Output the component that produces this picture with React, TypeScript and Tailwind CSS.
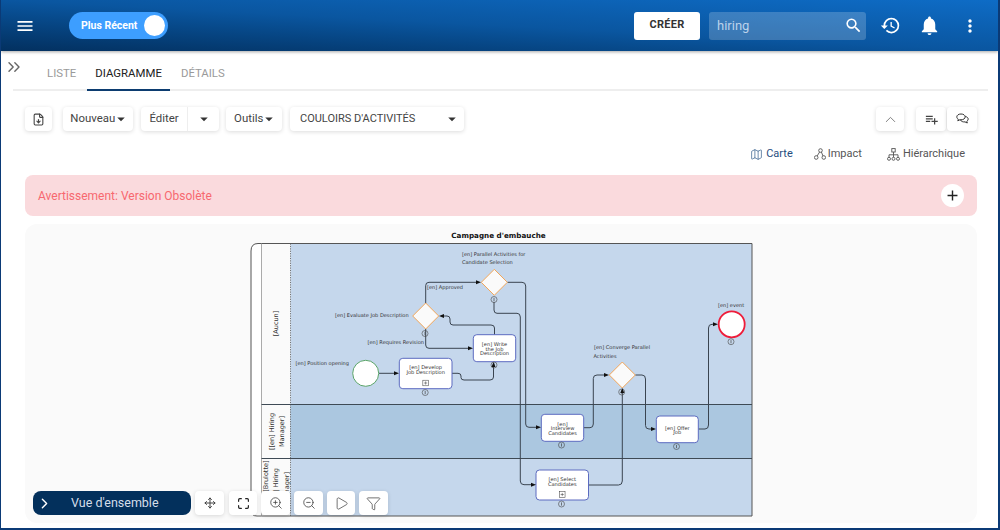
import { ChevronRight, ChevronUp, ChevronsRight, FileDown, Filter, Map, Maximize, Move, Play, ZoomIn, ZoomOut } from "lucide-react";
import { MdAdd, MdArrowDropDown, MdHistory, MdMenu, MdMoreVert, MdNotifications, MdPlaylistAdd, MdSearch } from "react-icons/md";

const font = "font-['Roboto',sans-serif]";
const btn = "flex h-6 items-center justify-center rounded-[4px] bg-white text-[#444] shadow-[0_1px_4px_rgba(0,0,0,0.14)]";

function Caret() {
  return <MdArrowDropDown size={18} className="-ml-[3px] -mr-[4.5px] text-[#333]" />;
}

function ImpactIcon() {
  return (
    <svg width="12" height="12" viewBox="0 0 12 12" fill="none" stroke="#555" strokeWidth="0.9">
      <circle cx="6.5" cy="2.5" r="1.8" />
      <circle cx="2.2" cy="9.5" r="1.8" />
      <circle cx="9.8" cy="9.5" r="1.8" />
      <path d="M5.6 4 3.1 8M7.4 4l1.6 4" />
    </svg>
  );
}

function HierarchyIcon() {
  return (
    <svg width="13" height="13" viewBox="0 0 13 13" fill="none" stroke="#555" strokeWidth="0.9">
      <rect x="4.8" y="0.6" width="3.4" height="3.4" />
      <circle cx="2" cy="10.8" r="1.5" />
      <circle cx="6.5" cy="10.8" r="1.5" />
      <circle cx="11" cy="10.8" r="1.5" />
      <path d="M6.5 4v5.3M2 9.3V6.8h9v2.5" />
    </svg>
  );
}

function ChatIcon() {
  return (
    <svg width="13" height="12" viewBox="0 0 13 12" fill="none" stroke="#333" strokeWidth="1">
      <path d="M5 1C2.6 1 .8 2.2.8 3.9c0 1 .6 1.8 1.5 2.3L1.8 7.8 4 6.7c.3 0 .7.1 1 .1 2.4 0 4.2-1.2 4.2-2.9S7.400 1 5 1Z" fill="#fff" />
      <path d="M9.300 3.400c1.700.4 2.900 1.400 2.900 2.700 0 .9-.6 1.700-1.400 2.200l.5 1.700-2.300-1.100c-2 .2-3.800-.5-4.500-1.800" />
    </svg>
  );
}

function Info({ x, y }: { x: number; y: number }) {
  return (
    <g>
      <circle cx={x} cy={y} r="3" fill="none" stroke="#444" strokeWidth="0.6" />
      <path d={`M${x} ${y - 1.6}V${y + 1.6}`} stroke="#444" strokeWidth="0.7" />
    </g>
  );
}

function Task({ x, y, w, h, lines, plus }: { x: number; y: number; w: number; h: number; lines: [string, number][]; plus?: number }) {
  const cx = x + w / 2;
  return (
    <g>
      <rect x={x} y={y} width={w} height={h} rx="3.5" fill="#fff" stroke="#5c6bc0" strokeWidth="1" />
      {lines.map(([t, ty]) => (
        <text key={t} x={cx} y={ty} textAnchor="middle" fontSize="5.1" fill="#333">
          {t}
        </text>
      ))}
      {plus && (
        <g fill="none" stroke="#333" strokeWidth="0.5">
          <rect x={cx - 2.8} y={plus - 2.8} width="5.6" height="5.6" />
          <path d={`M${cx - 1.6} ${plus}h3.2M${cx} ${plus - 1.6}v3.2`} />
        </g>
      )}
    </g>
  );
}

function Gateway({ x, y }: { x: number; y: number }) {
  return <path d={`M${x} ${y - 13}L${x + 13} ${y}L${x} ${y + 13}L${x - 13} ${y}Z`} fill="#fafafa" stroke="#f2a65a" strokeWidth="1" />;
}

function Arrow({ x, y, dir }: { x: number; y: number; dir: "r" | "l" | "u" }) {
  const d =
    dir === "r"
      ? `M${x} ${y}l-5 -2v4z`
      : dir === "l"
        ? `M${x} ${y}l5 -2v4z`
        : `M${x} ${y}l-2 5h4z`;
  return <path d={d} fill="#111" />;
}

const labels: [string, number, number][] = [
  ["[en] Parallel Activities for", 462, 255.5],
  ["Candidate Selection", 462, 264],
  ["[en] Approved", 427, 288.5],
  ["[en] Evaluate Job Description", 335, 317],
  ["[en] Requires Revision", 367.5, 343.5],
  ["[en] Position opening", 295.5, 365],
  ["[en] event", 718, 306.5],
  ["[en] Converge Parallel", 594, 348.5],
  ["Activities", 593.5, 357.5],
];

const edges = [
  "M379 373.3H395",
  "M452 373.3H458Q461 373.3 461 376V377.5Q461 380 464 380H490Q493.5 380 493.5 377V366",
  "M494.5 334.7V328Q494.5 325 491 325H453Q450 325 450 322V319Q450 316 447 316H444",
  "M425.7 329V345Q425.7 348.3 429 348.3H468",
  "M425.7 303V285.5Q425.7 282.3 429 282.3H476",
  "M507.3 282.3H522Q525.7 282.3 525.7 286V424Q525.7 427.3 529 427.3H536",
  "M494 302V310Q494 313.3 497 313.3H517Q520.3 313.3 520.3 317V481Q520.3 484.7 524 484.7H531",
  "M583.7 427.7H590Q593.3 427.7 593.3 424V378.5Q593.3 375 597 375H604",
  "M588.5 485H618.5Q622.3 485 622.3 481V393",
  "M635.3 375H642Q645.5 375 645.5 379V425.5Q645.5 429 649 429H651",
  "M698.3 429H705Q708.5 429 708.5 425V328Q708.5 324.3 712 324.3H713",
];

function Diagram() {
  return (
    <svg width="506" height="292" viewBox="250 228 506 292" className="ml-[225px] mt-[4px] shrink-0 font-['DejaVu_Sans',sans-serif]">
      <text x="498.5" y="238" textAnchor="middle" fontSize="7.2" fontWeight="700" fill="#111">
        Campagne d'embauche
      </text>
      <path d="M290.5 243.5H752V516H290.5Z" fill="#c5d7ec" />
      <rect x="290.5" y="404.5" width="461.5" height="54" fill="#abc7e0" />
      <path d="M261.5 243.5H752V516H261.5Z" fill="none" stroke="#555" strokeWidth="1" />
      <path d="M261.5 243.5H258Q251 243.5 251 251V510Q251 516 257 516H261.5" fill="#fff" stroke="#555" strokeWidth="1" />
      <path d="M290.5 243.5V516" stroke="#555" strokeWidth="0.8" strokeDasharray="1.2 1.2" />
      <path d="M261.5 404.5H752M261.5 458.5H752" stroke="#3e4a55" strokeWidth="1" />
      <g fontSize="6.5" fill="#333" textAnchor="middle">
        <text transform="translate(278 323.5) rotate(-90)">[Aucun]</text>
        <text transform="translate(274 431.5) rotate(-90)">[[en] Hiring</text>
        <text transform="translate(284 431.5) rotate(-90)">Manager]</text>
      </g>
      <g fontSize="6.5" fill="#333" textAnchor="end">
        <text transform="translate(268 460.5) rotate(-90)">[Brulotte]</text>
        <text transform="translate(278 468) rotate(-90)">[en] | Hiring</text>
        <text transform="translate(289 472) rotate(-90)">Manager]</text>
      </g>
      {labels.map(([t, x, y]) => (
        <text key={t} x={x} y={y} fontSize="5.05" fill="#333">
          {t}
        </text>
      ))}
      <g fill="none" stroke="#3a4450" strokeWidth="1">
        {edges.map((d) => (
          <path key={d} d={d} />
        ))}
      </g>
      <circle cx="365.7" cy="373.3" r="13" fill="#fff" stroke="#5aa469" strokeWidth="1" />
      <circle cx="731.7" cy="324.3" r="13" fill="#fff" stroke="#ee1c3a" strokeWidth="1.8" />
      <Gateway x={425.7} y={316} />
      <Gateway x={494.3} y={282.3} />
      <Gateway x={622.3} y={375} />
      <Task x={399.3} y={358.3} w={52.7} h={30.4} lines={[["[en] Develop", 369], ["Job Description", 374]]} plus={383} />
      <Task x={473.3} y={334.7} w={42.4} h={27} lines={[["[en] Write", 346], ["the Job", 350.5], ["Description", 355]]} />
      <Task x={541.3} y={414.3} w={42.4} h={27} lines={[["[en]", 425.5], ["Interview", 430.2], ["Candidates", 435]]} />
      <Task x={656.3} y={416} w={42} h={26.7} lines={[["[en] Offer", 429.5], ["Job", 434]]} />
      <Task x={536} y={470} w={52.5} h={30} lines={[["[en] Select", 481], ["Candidates", 486]]} plus={494.5} />
      <Info x={425.2} y={392.5} />
      <Info x={494} y={365} />
      <Info x={425} y={333.5} />
      <Info x={494} y={299.5} />
      <Info x={621.7} y={392} />
      <Info x={731} y={341.7} />
      <Info x={561.5} y={445} />
      <Info x={676.5} y={446.5} />
      <Info x={561.5} y={504} />
      <Arrow x={399} y={373.3} dir="r" />
      <Arrow x={493.5} y={362} dir="u" />
      <Arrow x={439} y={316} dir="l" />
      <Arrow x={473} y={348.3} dir="r" />
      <Arrow x={481} y={282.3} dir="r" />
      <Arrow x={541} y={427.3} dir="r" />
      <Arrow x={536} y={484.7} dir="r" />
      <Arrow x={609} y={375} dir="r" />
      <Arrow x={622.3} y={388} dir="u" />
      <Arrow x={656} y={429} dir="r" />
      <Arrow x={718} y={324.3} dir="r" />
    </svg>
  );
}

export default function App() {
  return (
    <div className={`flex h-[530px] w-[1000px] flex-col overflow-hidden border-b-2 border-l border-r-2 border-[#0b3a76] bg-white ${font}`}>
      <header className="flex h-[51px] shrink-0 items-center bg-gradient-to-tr from-[#03305f] via-[#0a56a0] to-[#0e6cc6] shadow-[0_1px_3px_rgba(0,0,0,0.35)]">
        <MdMenu size={20} className="ml-[14px] text-white" />
        <div className="ml-[34px] flex h-[27px] w-[99px] items-center rounded-full bg-[#3d9eff] pl-3 pr-[3px]">
          <span className="flex-1 text-[10.5px] font-bold text-white">Plus Récent</span>
          <span className="h-[21px] w-[21px] rounded-full bg-white" />
        </div>
        <button className="ml-auto h-7 w-[66px] rounded-[3px] bg-white text-[11px] font-bold tracking-[0.3px] text-[#333]">CRÉER</button>
        <div className="ml-[9px] flex h-7 w-[157px] items-center justify-between rounded-[3px] bg-white/20 pl-2 pr-[3px]">
          <span className="text-[13px] text-[#bcd2ea]">hiring</span>
          <MdSearch size={19} className="text-white" />
        </div>
        <MdHistory size={21} className="ml-[14px] text-white" />
        <MdNotifications size={23} className="ml-[17px] text-white" />
        <MdMoreVert size={20} className="ml-[19px] mr-[18px] text-white" />
      </header>

      <div className="ml-3 mr-[10px] flex h-[40px] shrink-0 items-end gap-[3px] border-b-2 border-[#eee] text-[11.4px]">
        <ChevronsRight size={20} strokeWidth={1.7} className="-ml-[9px] mb-[12px] mr-[12px] text-[#666]" />
        <span className="px-2 pb-[7px] text-[#9a9a9a]">LISTE</span>
        <span className="-mb-[2px] border-b-2 border-[#0c3c70] px-2 pb-[7px] text-[#222]">DIAGRAMME</span>
        <span className="px-2 pb-[7px] text-[#9a9a9a]">DÉTAILS</span>
      </div>

      <div className="ml-6 mr-[21px] mt-[16px] flex shrink-0 items-center text-[11.4px] text-[#444]">
        <div className={`${btn} w-[27px]`}>
          <FileDown size={13} />
        </div>
        <div className={`${btn} ml-[11px] w-[70px]`}>
          Nouveau
          <Caret />
        </div>
        <div className={`${btn} ml-2 w-[78px]`}>
          <span className="flex h-full w-[47px] items-center justify-center border-r border-[#eee]">Éditer</span>
          <span className="flex flex-1 justify-center">
            <Caret />
          </span>
        </div>
        <div className={`${btn} ml-[7px] w-[56px]`}>
          Outils
          <Caret />
        </div>
        <div className={`${btn} ml-2 w-[174px] !justify-between pl-[10px] pr-[8px]`}>
          <span className="text-[11px]">COULOIRS D'ACTIVITÉS</span>
          <Caret />
        </div>
        <div className={`${btn} ml-auto w-7`}>
          <ChevronUp size={17} strokeWidth={1.3} className="text-[#777]" />
        </div>
        <div className={`${btn} ml-3 w-[30px]`}>
          <MdPlaylistAdd size={15} />
        </div>
        <div className={`${btn} ml-px w-[30px]`}>
          <ChatIcon />
        </div>
      </div>

      <div className="mt-[15px] flex h-4 shrink-0 items-center justify-end pr-[33px] text-[11px] text-[#555]">
        <Map size={13} strokeWidth={1.2} className="mr-[3px] text-[#1f4e80]" />
        <span className="text-[#1f4e80]">Carte</span>
        <span className="ml-[21px] mr-[2px]">
          <ImpactIcon />
        </span>
        Impact
        <span className="ml-[25px] mr-[3px]">
          <HierarchyIcon />
        </span>
        Hiérarchique
      </div>

      <div className="ml-6 mr-[21px] mt-[13px] flex h-[41px] shrink-0 items-center justify-between rounded-lg bg-[#fadadd] pl-[13px] pr-[13px] text-[12px] text-[#f7686f]">
        Avertissement: Version Obsolète
        <span className="flex h-[23px] w-[23px] items-center justify-center rounded-full bg-white text-[#222]">
          <MdAdd size={17} />
        </span>
      </div>

      <div className="relative ml-6 mr-[21px] mt-2 flex h-[299px] shrink-0 rounded-xl bg-[#fafafa]">
        <Diagram />
        <div className="absolute bottom-[8px] left-2 flex gap-1">
          <div className="flex h-6 w-[158px] items-center rounded-lg bg-[#03305c] pl-[3px] text-[12.5px] text-[#d5deea]">
            <ChevronRight size={17} className="text-white" />
            <span className="ml-[18px]">Vue d'ensemble</span>
          </div>
          <div className={`${btn} w-[29px]`}>
            <Move size={12} />
          </div>
          <div className={`${btn} ml-px w-[28px]`}>
            <Maximize size={13} strokeWidth={2.2} className="text-[#222]" />
          </div>
          <div className={`${btn} w-[29px]`}>
            <ZoomIn size={14} strokeWidth={1.4} />
          </div>
          <div className={`${btn} w-[29px]`}>
            <ZoomOut size={14} strokeWidth={1.4} />
          </div>
          <div className={`${btn} w-[28px]`}>
            <Play size={15} strokeWidth={1.2} />
          </div>
          <div className={`${btn} w-[29px]`}>
            <Filter size={15} strokeWidth={1.2} />
          </div>
        </div>
      </div>
    </div>
  );
}
